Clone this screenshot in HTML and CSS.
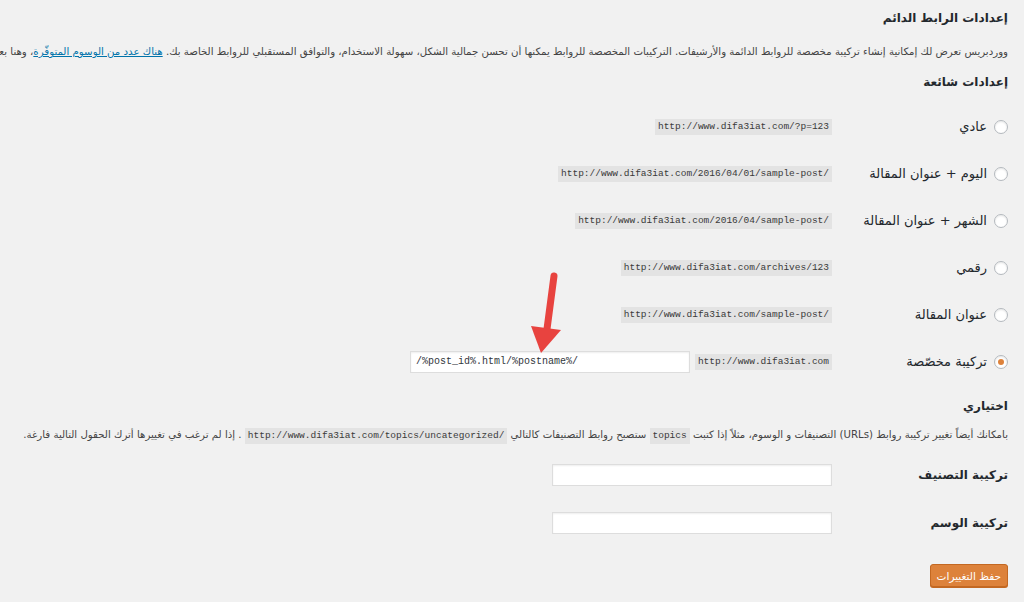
FILE: index.html
```html
<!DOCTYPE html>
<html lang="ar" dir="rtl">
<head>
    <meta charset="UTF-8">
    <title>إعدادات الرابط الدائم</title>
    <link rel="stylesheet" href="styles.css">
</head>
<body>
    <div class="wrap">
        <h1>إعدادات الرابط الدائم</h1>

        <p class="intro">ووردبريس تعرض لك إمكانية إنشاء تركيبة مخصصة للروابط الدائمة والأرشيفات. التركيبات المخصصة للروابط يمكنها أن تحسن جمالية الشكل، سهولة الاستخدام، والتوافق المستقبلي للروابط الخاصة بك. <a href="#">هناك عدد من الوسوم المتوفّرة</a>، وهنا بعض الأمثلة لتبدأ بها.</p>

        <h2 class="title">إعدادات شائعة</h2>

        <div class="form-table">
            <div class="row">
                <label class="row-th"><span class="radio"></span>عادي</label>
                <div class="row-td"><code>http://www.difa3iat.com/?p=123</code></div>
            </div>
            <div class="row">
                <label class="row-th"><span class="radio"></span>اليوم + عنوان المقالة</label>
                <div class="row-td"><code>http://www.difa3iat.com/2016/04/01/sample-post/</code></div>
            </div>
            <div class="row">
                <label class="row-th"><span class="radio"></span>الشهر + عنوان المقالة</label>
                <div class="row-td"><code>http://www.difa3iat.com/2016/04/sample-post/</code></div>
            </div>
            <div class="row">
                <label class="row-th"><span class="radio"></span>رقمي</label>
                <div class="row-td"><code>http://www.difa3iat.com/archives/123</code></div>
            </div>
            <div class="row">
                <label class="row-th"><span class="radio"></span>عنوان المقالة</label>
                <div class="row-td"><code>http://www.difa3iat.com/sample-post/</code></div>
            </div>
            <div class="row">
                <label class="row-th"><span class="radio checked"></span>تركيبة مخصّصة</label>
                <div class="row-td">
                    <code>http://www.difa3iat.com</code>
                    <input class="text-input custom" type="text" value="/%post_id%.html/%postname%/">
                </div>
            </div>
        </div>

        <h2 class="title optional">اختياري</h2>

        <p class="note">بامكانك أيضاً تغيير تركيبة روابط (URLs) التصنيفات و الوسوم، مثلاً إذا كتبت <code>topics</code> ستصبح روابط التصنيفات كالتالي <code>http://www.difa3iat.com/topics/uncategorized/</code> . إذا لم ترغب في تغييرها أترك الحقول التالية فارغة.</p>

        <div class="form-table small">
            <div class="row">
                <label class="row-th">تركيبة التصنيف</label>
                <div class="row-td"><input class="text-input" type="text"></div>
            </div>
            <div class="row">
                <label class="row-th">تركيبة الوسم</label>
                <div class="row-td"><input class="text-input" type="text"></div>
            </div>
        </div>

        <div class="submit">
            <button class="button-primary">حفظ التغييرات</button>
        </div>

        <!-- السهم الأحمر -->
        <svg class="arrow" width="50" height="95" viewBox="0 0 50 95">
            <line x1="32" y1="9" x2="25" y2="62" stroke="#e8433f" stroke-width="7" stroke-linecap="round"/>
            <polygon points="9,59 39,63 19,86" fill="#e8433f"/>
        </svg>
    </div>
</body>
</html>
```

FILE: styles.css
```css
html, body {
    margin: 0;
    padding: 0;
    background-color: #f1f1f1;
    overflow: hidden;
}
body {
    font-family: Tahoma, "DejaVu Sans", sans-serif;
    font-size: 12px;
    color: #444;
}
.wrap {
    position: relative;
    padding: 0 16px 0 0;
    height: 602px;
}
h1 {
    font-size: 12px;
    font-weight: bold;
    line-height: 24px;
    color: #23282d;
    margin: 6px 0 0;
}
.intro {
    white-space: nowrap;
    font-size: 10.2px;
    line-height: 18px;
    margin: 13px 0 0;
}
.intro a {
    color: #0073aa;
}
h2.title {
    font-size: 12px;
    font-weight: bold;
    line-height: 18px;
    color: #23282d;
    margin: 12px 0 0;
}
h2.optional {
    margin-top: 12px;
}
.form-table {
    margin-top: 12px;
}
.row {
    display: flex;
    align-items: center;
    height: 47px;
}
.form-table.small {
    margin-top: 7px;
}
.form-table.small .row {
    height: 48px;
}
.row-th {
    width: 176px;
    flex-shrink: 0;
    display: flex;
    align-items: center;
    font-size: 13px;
    color: #23282d;
}
.form-table.small .row-th {
    font-weight: bold;
    font-size: 12px;
}
.row-td {
    display: flex;
    align-items: center;
    gap: 5px;
}
.radio {
    width: 12px;
    height: 12px;
    border: 1px solid #b4b9be;
    border-radius: 50%;
    background-color: #fff;
    box-shadow: inset 0 1px 2px rgba(0, 0, 0, 0.1);
    margin: 0 0 0 7px;
    display: inline-flex;
    align-items: center;
    justify-content: center;
}
.radio.checked::before {
    content: "";
    width: 6px;
    height: 6px;
    border-radius: 50%;
    background-color: #dd823b;
}
code {
    direction: ltr;
    unicode-bidi: embed;
    font-family: "Liberation Mono", "DejaVu Sans Mono", monospace;
    font-size: 9.5px;
    line-height: 16px;
    display: inline-block;
    padding: 0 3px;
    background-color: #e3e3e3;
    color: #3a3a3a;
}
.text-input {
    direction: ltr;
    width: 280px;
    height: 22px;
    box-sizing: border-box;
    border: 1px solid #ddd;
    background-color: #fff;
    box-shadow: inset 0 1px 2px rgba(0, 0, 0, 0.07);
    padding: 0 5px;
    margin: 0;
    font-family: "Liberation Mono", "DejaVu Sans Mono", monospace;
    font-size: 10px;
    color: #32373c;
}
.note {
    white-space: nowrap;
    font-size: 10.2px;
    line-height: 18px;
    margin: 11px 0 0;
}
.submit {
    margin-top: 17px;
}
.button-primary {
    height: 23px;
    padding: 0 6px;
    font-family: Tahoma, "DejaVu Sans", sans-serif;
    font-size: 10.5px;
    color: #fff;
    background-color: #dd823b;
    border: 1px solid #c36822;
    border-radius: 3px;
    box-shadow: 0 1px 0 #c36822;
    cursor: pointer;
}
.arrow {
    position: absolute;
    left: 522px;
    top: 261px;
}
```
